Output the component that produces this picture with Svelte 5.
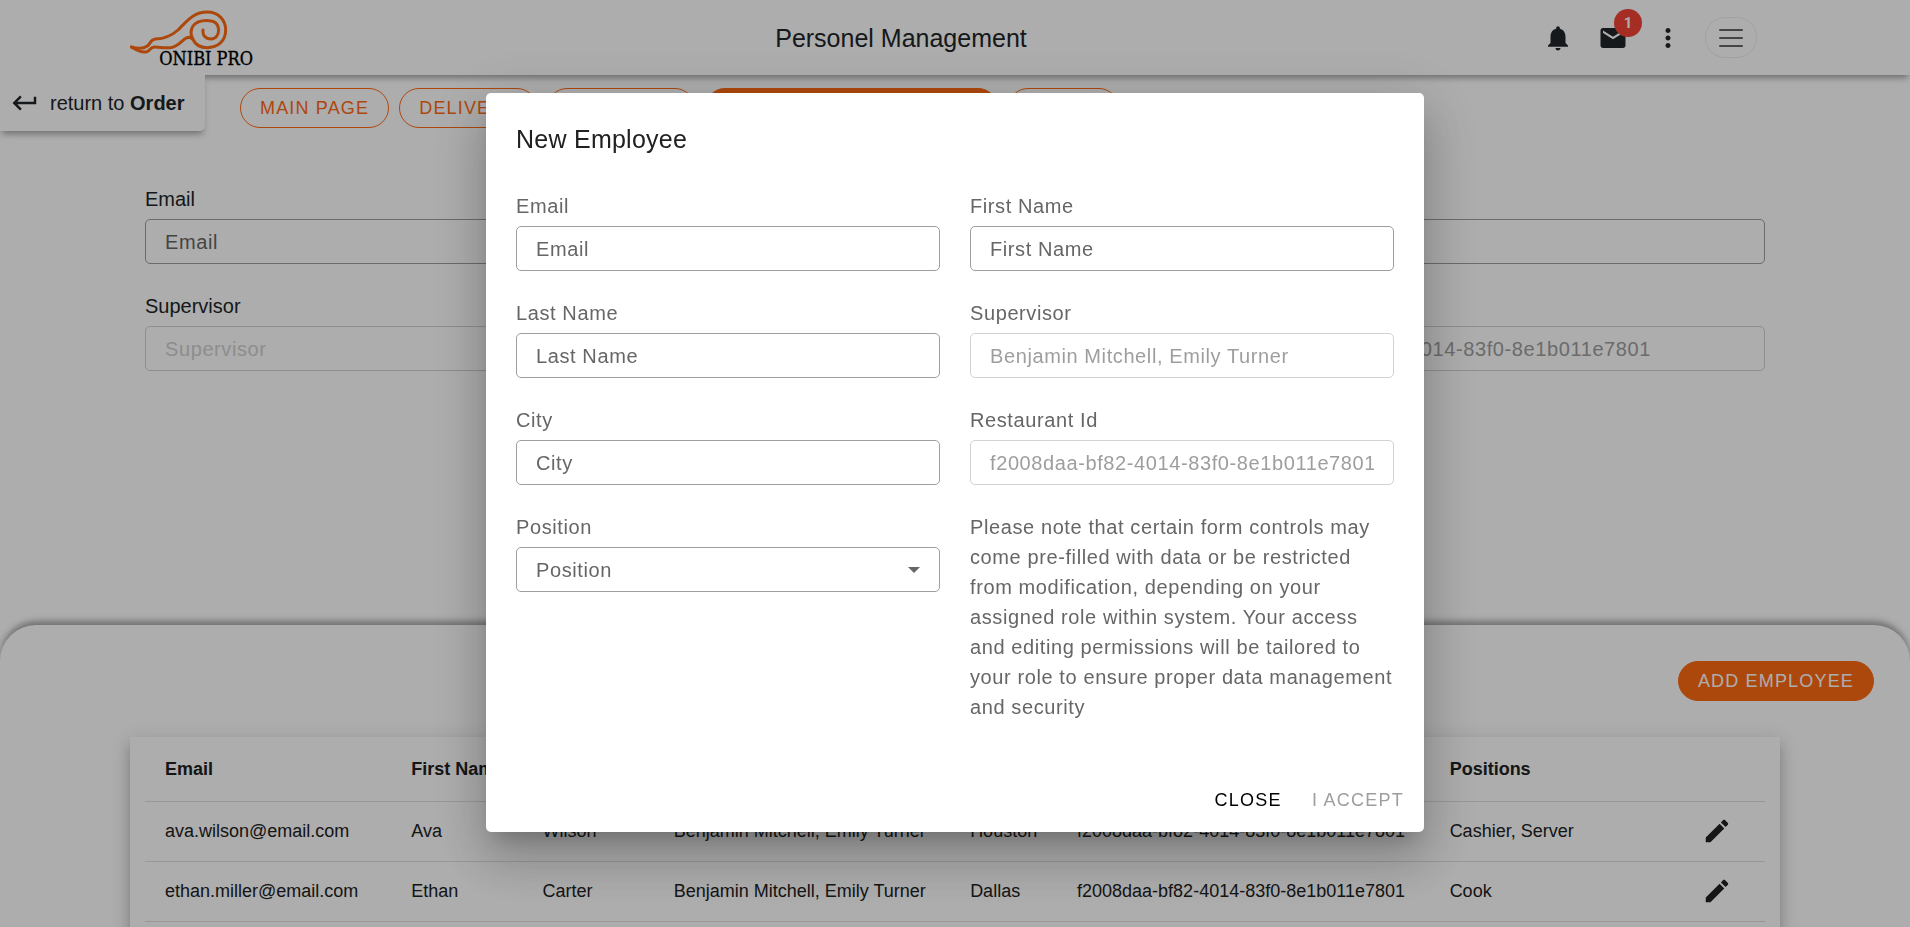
<script>
  const restaurantId = 'f2008daa-bf82-4014-83f0-8e1b011e7801';
  const supervisors = 'Benjamin Mitchell, Emily Turner';

  const tabs = [
    { label: 'Main page' },
    { label: 'Delivery' },
    { label: 'Schedule' },
    { label: 'Personel management', active: true },
    { label: 'Order' }
  ];

  const filters = [
    { id: 'filter-email', label: 'Email' },
    { id: 'filter-first-name', label: 'First Name' },
    { id: 'filter-last-name', label: 'Last Name' },
    { id: 'filter-supervisor', label: 'Supervisor', disabled: true },
    { id: 'filter-city', label: 'City' },
    { id: 'filter-restaurant', label: 'Restaurant Id', value: restaurantId, disabled: true }
  ];

  const fields = [
    { id: 'new-email', label: 'Email' },
    { id: 'new-first-name', label: 'First Name' },
    { id: 'new-last-name', label: 'Last Name' },
    { id: 'new-supervisor', label: 'Supervisor', value: supervisors, disabled: true },
    { id: 'new-city', label: 'City' },
    { id: 'new-restaurant', label: 'Restaurant Id', value: restaurantId, disabled: true }
  ];

  const columns = ['Email', 'First Name', 'Last Name', 'Supervisor', 'City', 'Restaurant Id', 'Positions', ''];
  const employees = [
    ['ava.wilson@email.com', 'Ava', 'Wilson', supervisors, 'Houston', restaurantId, 'Cashier, Server'],
    ['ethan.miller@email.com', 'Ethan', 'Carter', supervisors, 'Dallas', restaurantId, 'Cook']
  ];
</script>

{#snippet field(f)}
  <div class="field">
    <label for={f.id}>{f.label}</label>
    <input id={f.id} type="text" placeholder={f.label} value={f.value ?? ''} disabled={f.disabled} />
  </div>
{/snippet}

<div class="page">
  <header>
    <a class="logo" href="#home" aria-label="Onibi Pro">
      <svg viewBox="60 22 372 180" width="124" height="60">
        <g fill="none" stroke="#ff6a13" stroke-width="9" stroke-linecap="round" stroke-linejoin="round">
          <path d="M64 139C82 144 102 143 112 136C122 128 122 116 137 115C168 114 186 104 204 88C232 60 250 34 292 34C326 34 347 59 347 88C347 121 324 141 291 141C270 141 256 132 248 115C242 102 241 88 249 76C259 62 279 59 297 60C315 61 325 71 326 86C326 104 317 115 303 115C287 115 277 104 279 88" />
          <path d="M64 139C82 150 95 156 108 154C121 151 119 139 134 139C151 139 161 143 181 141C211 137 221 107 239 110L248 115" />
        </g>
        <text x="148" y="194">ONIBI PRO</text>
      </svg>
    </a>
    <h1>Personel Management</h1>
    <div class="tools">
      <button class="icon" aria-label="Notifications">
        <svg viewBox="0 0 24 24"><path d="M12 22c1.100 0 2-.9 2-2h-4c0 1.100.89 2 2 2zm6-6v-5c0-3.070-1.640-5.640-4.500-6.320V4c0-.83-.67-1.500-1.500-1.500s-1.500.67-1.500 1.500v.68C7.630 5.360 6 7.920 6 11v5l-2 2v1h16v-1l-2-2z" /></svg>
      </button>
      <button class="icon mail" aria-label="Messages">
        <svg viewBox="0 0 24 24"><path d="M20 4H4c-1.100 0-1.990.9-1.990 2L2 18c0 1.100.9 2 2 2h16c1.100 0 2-.9 2-2V6c0-1.100-.9-2-2-2zm0 4l-8 5-8-5V6l8 5 8-5v2z" /></svg>
        <span class="badge">1</span>
      </button>
      <button class="icon" aria-label="More">
        <svg viewBox="0 0 24 24"><path d="M12 8c1.100 0 2-.9 2-2s-.9-2-2-2-2 .9-2 2 .9 2 2 2zm0 2c-1.100 0-2 .9-2 2s.9 2 2 2 2-.9 2-2-.9-2-2-2zm0 6c-1.100 0-2 .9-2 2s.9 2 2 2 2-.9 2-2-.9-2-2-2z" /></svg>
      </button>
      <button class="toggler" aria-label="Menu">
        <svg viewBox="0 0 30 30"><path d="M4 7h22M4 15h22M4 23h22" fill="none" stroke="currentColor" stroke-width="2" stroke-linecap="round" /></svg>
      </button>
    </div>
  </header>

  <main>
    <a class="return" href="#order">
      <svg viewBox="0 0 24 24"><path d="M19 7v4H5.830l3.580-3.590L8 6l-6 6 6 6 1.410-1.410L5.830 13H21V7z" /></svg>
      <span>return to <b>Order</b></span>
    </a>
    <nav>
      {#each tabs as tab}
        <button class="pill" class:filled={tab.active}>{tab.label}</button>
      {/each}
    </nav>
    <form class="filters">
      {#each filters as f}
        {@render field(f)}
      {/each}
    </form>
  </main>

  <section class="sheet">
    <div class="bar"><button class="pill filled">Add employee</button></div>
    <div class="card">
      <table>
        <colgroup>
          <col class="c-email" /><col class="c-name" /><col class="c-name" /><col class="c-super" />
          <col class="c-city" /><col class="c-id" /><col /><col class="c-edit" />
        </colgroup>
        <thead>
          <tr>{#each columns as c}<th>{c}</th>{/each}</tr>
        </thead>
        <tbody>
          {#each employees as row}
            <tr>
              {#each row as cell}<td>{cell}</td>{/each}
              <td class="edit">
                <button class="icon" aria-label="Edit">
                  <svg viewBox="0 0 24 24"><path d="M3 17.250V21h3.750L17.810 9.940l-3.750-3.750L3 17.250zM20.710 7.040c.39-.39.39-1.020 0-1.410l-2.340-2.340c-.39-.39-1.020-.39-1.410 0l-1.830 1.830 3.750 3.750 1.830-1.830z" /></svg>
                </button>
              </td>
            </tr>
          {/each}
        </tbody>
      </table>
    </div>
  </section>
</div>

<div class="backdrop">
  <div class="dialog" role="dialog" aria-modal="true" aria-labelledby="dialog-title">
    <h2 id="dialog-title">New Employee</h2>
    <form class="content">
      {#each fields as f}
        {@render field(f)}
      {/each}
      <div class="field">
        <label for="new-position">Position</label>
        <div class="select">
          <select id="new-position">
            <option value="">Position</option>
            <option>Cashier</option>
            <option>Server</option>
            <option>Cook</option>
          </select>
          <svg viewBox="0 0 12 6"><path d="M0 0h12L6 6z" /></svg>
        </div>
      </div>
      <p>
        Please note that certain form controls may come pre-filled with data or be restricted from
        modification, depending on your assigned role within system. Your access and editing
        permissions will be tailored to your role to ensure proper data management and security
      </p>
    </form>
    <div class="actions">
      <button class="flat">Close</button>
      <button class="flat" disabled>I accept</button>
    </div>
  </div>
</div>

<style>
  :global(body) {
    margin: 0;
    background: #fff;
    color: #212529;
    font: 20px/30px 'Liberation Sans', Arial, sans-serif;
  }
  .page, .page *, .backdrop, .backdrop * { box-sizing: border-box; }
  button, input, select { font: inherit; color: inherit; }
  button { margin: 0; padding: 0; border: 0; background: none; cursor: pointer; }
  svg { display: block; fill: currentColor; }
  h1, h2, p { margin: 0; font-weight: 400; }
  a { color: inherit; text-decoration: none; }

  .page {
    height: 100vh;
    display: flex;
    flex-direction: column;
    overflow: hidden;
  }
  header {
    position: relative;
    z-index: 2;
    flex: none;
    height: 75px;
    padding: 0 153px 0 130px;
    display: flex;
    align-items: center;
    justify-content: space-between;
    background: #fff;
    box-shadow: 0 5px 6px -2px rgba(0, 0, 0, 0.35);
  }
  .logo { padding-right: 5px; }
  .logo text {
    font: 54px 'DejaVu Serif Condensed', 'DejaVu Serif', serif;
    fill: #000;
    stroke: #000;
    stroke-width: 1px;
  }
  h1 { font-size: 25px; }
  .tools { display: flex; align-items: center; gap: 25px; }
  .icon { width: 30px; height: 30px; position: relative; }
  .badge {
    position: absolute;
    left: 16px;
    top: -14px;
    width: 28px;
    height: 28px;
    border-radius: 50%;
    background: #f44336;
    color: #fff;
    font: 700 15px/28px Roboto, sans-serif;
    text-align: center;
  }
  .toggler {
    width: 52px;
    height: 41px;
    padding: 0 10px;
    margin-left: -3px;
    border: 1px solid #eee;
    border-radius: 20px;
    color: #666;
  }

  main {
    position: relative;
    flex: 1;
    min-height: 0;
    padding: 13px 145px 0;
  }
  .return {
    position: absolute;
    z-index: 3;
    left: 0;
    top: 0;
    height: 56px;
    padding: 0 20px 0 10px;
    display: flex;
    align-items: center;
    gap: 10px;
    background: #fff;
    border-bottom-right-radius: 5px;
    box-shadow: 0 5px 6px -2px rgba(0, 0, 0, 0.35);
    clip-path: inset(0 -10px -15px 0);
  }
  .return svg { width: 30px; }
  nav { display: flex; gap: 10px; margin-left: 95px; }
  .pill {
    height: 40px;
    padding: 0 19px;
    border: 1px solid #ff6a13;
    border-radius: 20px;
    color: #ff6a13;
    font-size: 18px;
    letter-spacing: 0.065em;
    text-transform: uppercase;
    white-space: nowrap;
  }
  .filled { background: #ff6a13; color: #fff; }
  .filters {
    margin-top: 56px;
    display: grid;
    grid-template-columns: repeat(3, 1fr);
    gap: 27px 30px;
  }
  .field { display: flex; flex-direction: column; gap: 5px; min-width: 0; }
  input, select {
    width: 100%;
    height: 45px;
    margin: 0;
    padding: 1px 19px 0;
    border: 1px solid #9e9e9e;
    border-radius: 5px;
    background: none;
    color: #666;
    letter-spacing: 0.03em;
    outline: none;
    opacity: 1;
  }
  input::placeholder { color: #666; opacity: 1; }
  input:disabled { border-color: #d2d2d2; color: #9e9e9e; }
  input:disabled::placeholder { color: #d0d0d0; }

  .sheet {
    position: relative;
    z-index: 1;
    flex: 0 0 302px;
    overflow: hidden;
    padding: 36px 36px 0;
    border-radius: 36px 36px 0 0;
    background: #fff;
    box-shadow: 0 -5px 6px -1px rgba(0, 0, 0, 0.35);
  }
  .bar { display: flex; justify-content: flex-end; }
  .card {
    margin: 36px 94px 0;
    min-height: 240px;
    padding: 0 15px;
    background: #fff;
    box-shadow: 0 6px 6px -4px rgba(0, 0, 0, 0.2), 0 10px 12px 1px rgba(0, 0, 0, 0.14), 0 4px 18px 2px rgba(0, 0, 0, 0.12);
  }
  table {
    width: 100%;
    table-layout: fixed;
    border-collapse: separate;
    border-spacing: 0;
    color: #212121;
    font-size: 18px;
  }
  .c-email { width: 15.2%; }
  .c-name { width: 8.100%; }
  .c-super { width: 18.3%; }
  .c-city { width: 6.600%; }
  .c-id { width: 23%; }
  .c-edit { width: 83px; }
  th, td {
    padding: 0 20px;
    border-bottom: 1px solid #e0e0e0;
    text-align: left;
    white-space: nowrap;
  }
  th { height: 65px; }
  td { height: 60px; padding-bottom: 2px; }
  td .icon { display: block; }

  .backdrop {
    position: fixed;
    z-index: 10;
    inset: 0;
    padding-bottom: 2px;
    box-sizing: border-box;
    display: flex;
    align-items: center;
    justify-content: center;
    background: rgba(0, 0, 0, 0.32);
  }
  .dialog {
    width: 938px;
    max-width: 80vw;
    border-radius: 5px;
    background: #fff;
    color: #666;
    letter-spacing: 0.03em;
    box-shadow: 0 14px 19px -9px rgba(0, 0, 0, 0.2), 0 30px 48px 4px rgba(0, 0, 0, 0.14), 0 11px 58px 10px rgba(0, 0, 0, 0.12);
  }
  h2 {
    padding: 31px 30px 37px;
    color: #212121;
    font-size: 25px;
    letter-spacing: 0.01em;
  }
  .content {
    padding: 0 30px 45px;
    display: grid;
    grid-template-columns: 1fr 1fr;
    gap: 27px 30px;
    align-items: start;
  }
  .select { position: relative; }
  select { appearance: none; }
  .select svg {
    position: absolute;
    right: 20px;
    top: 20px;
    width: 12px;
    pointer-events: none;
  }
  .actions {
    padding: 10px;
    display: flex;
    justify-content: flex-end;
    gap: 10px;
  }
  .flat {
    height: 45px;
    padding: 0 10px;
    color: #000;
    font-size: 18px;
    letter-spacing: 0.07em;
    text-transform: uppercase;
  }
  .flat:disabled { color: #9e9e9e; }
</style>
